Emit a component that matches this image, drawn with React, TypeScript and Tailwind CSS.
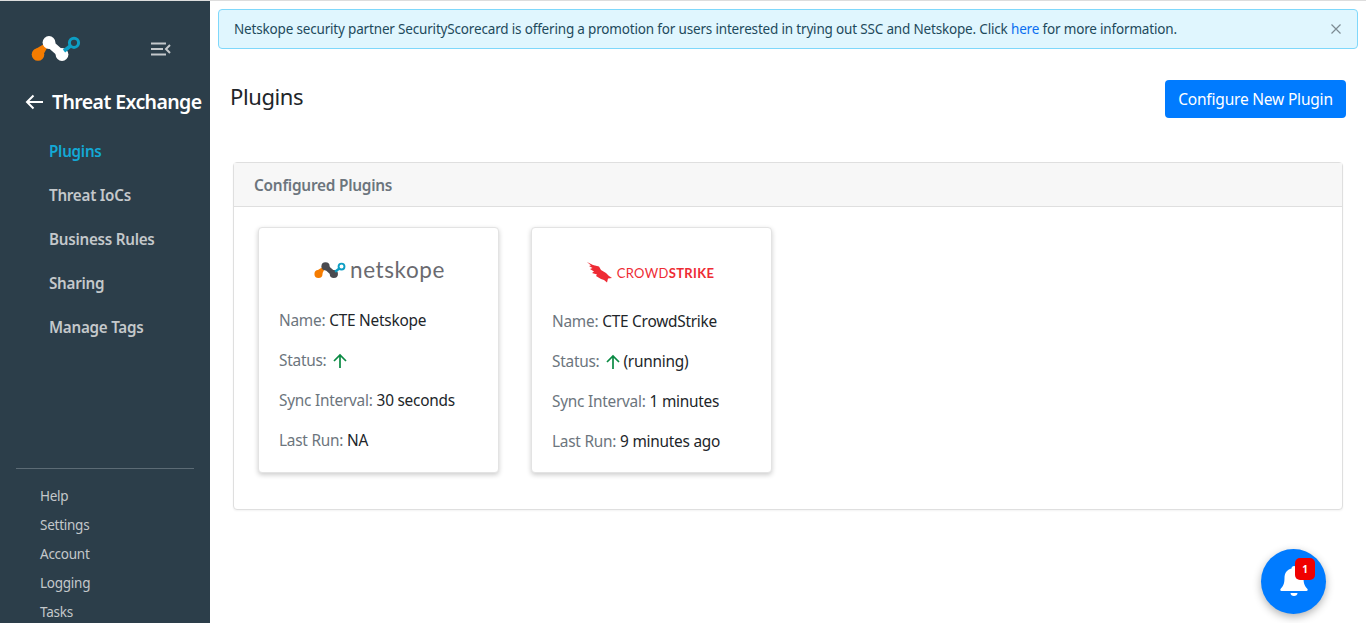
import React from "react";

function Mark({ ink = "#ffffff", className = "" }: { ink?: string; className?: string }) {
  return (
    <svg viewBox="0 0 50 26" className={className} aria-hidden="true">
      <path d="M3 14 L13 8 L16 12 L10 23 Z" fill="#f57c00" />
      <circle cx="7" cy="18.5" r="6.3" fill="#f57c00" />
      <path d="M18 7 L31 18.5" stroke={ink} strokeWidth="8" strokeLinecap="round" />
      <circle cx="18" cy="6.5" r="6.4" fill={ink} />
      <circle cx="31" cy="18.5" r="6.4" fill={ink} />
      <path d="M33 15 L40 9.5" stroke="#0d9ec4" strokeWidth="3.6" />
      <circle cx="43" cy="6.8" r="4.6" fill="none" stroke="#0d9ec4" strokeWidth="3" />
    </svg>
  );
}

function Field({ label, children }: { label: string; children: React.ReactNode }) {
  return (
    <div className="flex h-[40px] items-center whitespace-nowrap">
      <span className="text-[#6c757d]">{label}</span>
      <span className="ml-[4px] flex items-center text-[#212529]">{children}</span>
    </div>
  );
}

function Up() {
  return (
    <svg width="16" height="16" viewBox="0 0 16 16" fill="none" stroke="#0a8a43" strokeWidth="1.7" className="ml-[2px]">
      <path d="M8 15 V2 M2 8 L8 2 L14 8" />
    </svg>
  );
}

function PluginCard({ logo, rows, logoH }: { logo: React.ReactNode; rows: React.ReactNode; logoH: string }) {
  return (
    <div className="h-[246px] w-[241px] rounded-[4px] border border-[#e3e3e3] bg-white px-[20px] shadow-[0_2px_5px_rgba(0,0,0,0.2)]">
      <div className={`flex items-center justify-center ${logoH}`}>{logo}</div>
      {rows}
    </div>
  );
}

export default function App() {
  const nav = ["Plugins", "Threat IoCs", "Business Rules", "Sharing", "Manage Tags"];
  const foot = ["Help", "Settings", "Account", "Logging", "Tasks"];
  return (
    <div className="relative flex h-[623px] w-[1366px] overflow-hidden border-t border-[#dddddd] bg-white font-['Noto_Sans',sans-serif] text-[15.4px] tracking-[-0.25px]">
      <aside className="flex h-[622px] w-[210px] shrink-0 flex-col overflow-hidden bg-[#2c3e4a]">
        <div className="flex h-[72px] shrink-0 items-center pl-[31px] pt-[23px]">
          <Mark className="h-[26px] w-[50px]" />
          <svg width="20" height="14" viewBox="0 0 20 14" fill="none" stroke="#c4c8cb" strokeWidth="2" className="ml-[70px]">
            <path d="M0 1.5 H15 M0 7 H12 M0 12.5 H15 M19 3 L15 7 L19 11" />
          </svg>
        </div>
        <div className="mt-[15px] flex shrink-0 items-center pl-[25px] text-white">
          <svg width="18" height="16" viewBox="0 0 18 16" fill="none" stroke="white" strokeWidth="2">
            <path d="M18 8 H2 M8.5 1.5 L2 8 L8.5 14.5" />
          </svg>
          <span className="ml-[9px] whitespace-nowrap text-[19.5px] font-semibold leading-[28px] tracking-[-0.6px]">Threat Exchange</span>
        </div>
        <nav className="mt-[13px] flex shrink-0 flex-col pl-[49px]">
          {nav.map((n, i) => (
            <div key={n} className={`flex h-[44px] items-center text-[15.2px] font-semibold ${i === 0 ? "text-[#13a9d6]" : "text-[#c4c8cb]"}`}>
              {n}
            </div>
          ))}
        </nav>
        <div className="mx-[16px] mt-[119px] shrink-0 border-t border-[#5c6b75]" />
        <div className="mt-[13px] flex shrink-0 flex-col pl-[40px] text-[13.5px] tracking-[-0.25px] text-[#c4c8cb]">
          {foot.map((f) => (
            <div key={f} className="flex h-[29px] shrink-0 items-center">{f}</div>
          ))}
        </div>
      </aside>

      <main className="flex min-w-0 flex-1 flex-col">
        <div className="ml-[8px] mr-[8px] mt-[8px] flex h-[40px] items-center justify-between rounded-[4px] border border-[#7fd8fb] bg-[#e0f6fe] pl-[15px] pr-[16px] text-[13.5px] tracking-[-0.175px] text-[#1e4a5c]">
          <span>
            Netskope security partner SecurityScorecard is offering a promotion for users interested in trying out SSC and Netskope. Click <span className="text-[#0b6ef0]">here</span> for more information.
          </span>
          <svg width="10" height="10" viewBox="0 0 10 10" stroke="#7d8b93" strokeWidth="1.2">
            <path d="M0.5 0.5 L9.5 9.5 M9.5 0.5 L0.5 9.5" />
          </svg>
        </div>

        <div className="ml-[20px] mr-[20px] mt-[31px] flex items-start justify-between">
          <h1 className="mt-[1px] text-[22px] font-normal leading-[30px] tracking-[-0.4px] text-[#212529]">Plugins</h1>
          <button className="h-[38px] w-[181px] rounded-[4px] bg-[#007bff] pt-[2px] text-[15.5px] tracking-[-0.2px] text-white">Configure New Plugin</button>
        </div>

        <section className="ml-[23px] mr-[23px] mt-[44px] h-[348px] rounded-[4px] border border-[#dfdfdf] bg-white shadow-[0_1px_2px_rgba(0,0,0,0.05)]">
          <div className="flex h-[44px] items-center border-b border-[#dfdfdf] bg-[#f7f7f7] pl-[20px] pt-[2px] text-[15.4px] font-semibold text-[#6c757d]">
            Configured Plugins
          </div>
          <div className="flex gap-[32px] pl-[24px] pt-[20px]">
            <PluginCard
              logoH="h-[73px] pt-[11px]"
              logo={
                <div className="ml-[2px] flex items-center">
                  <Mark ink="#4a4a4f" className="h-[17px] w-[32px]" />
                  <span className="ml-[4px] font-['Lato',sans-serif] text-[22.5px] font-normal leading-none tracking-[0.6px] text-[#6a6a6f]">netskope</span>
                </div>
              }
              rows={
                <>
                  <Field label="Name:">CTE Netskope</Field>
                  <Field label="Status:"><Up /></Field>
                  <Field label="Sync Interval:">30 seconds</Field>
                  <Field label="Last Run:">NA</Field>
                </>
              }
            />
            <PluginCard
              logoH="h-[74px] pt-[14px]"
              logo={
                <div className="-ml-[2px] flex items-center">
                  <svg width="25" height="21" viewBox="0 0 25 21" fill="#ee2b34" aria-hidden="true">
                    <path d="M0 0 L6 3 L12 4.5 L14 8 L19 11 L22 14 L25 16 L21 16.5 L20 20.5 L17 18 L14 17 L9 14 L10 12.5 L5 11 L7 9.5 L3 7 L5.5 6 L2 4 L4 3.5 Z" />
                  </svg>
                  <span className="ml-[5px] mt-[2px] whitespace-nowrap font-['Lato',sans-serif] text-[13px] leading-none tracking-[0.35px] text-[#ee2b34]">
                    CROWD<span className="font-bold">STRIKE</span>
                  </span>
                </div>
              }
              rows={
                <>
                  <Field label="Name:">CTE CrowdStrike</Field>
                  <Field label="Status:"><Up /><span className="ml-[2px]">(running)</span></Field>
                  <Field label="Sync Interval:">1 minutes</Field>
                  <Field label="Last Run:">9 minutes ago</Field>
                </>
              }
            />
          </div>
        </section>
      </main>

      <div className="absolute left-[1261px] top-[548px] flex h-[65px] w-[65px] items-center justify-center rounded-full bg-[#007bff] shadow-[0_3px_8px_rgba(0,0,0,0.3)]">
        <svg width="28" height="31" viewBox="0 0 28 31" fill="white" aria-hidden="true">
          <path d="M14 0 C15.5 0 16.5 1 16.5 2.5 C21 3.5 23.5 7 23.5 12 C23.5 18 25 20.5 27.5 23 C28 24 27.5 25 26.5 25 H1.5 C0.5 25 0 24 0.5 23 C3 20.5 4.5 18 4.5 12 C4.5 7 7 3.5 11.5 2.5 C11.5 1 12.5 0 14 0 Z M10.5 27 H17.5 C17.5 29 16 30 14 30 C12 30 10.5 29 10.5 27 Z" />
        </svg>
        <span className="absolute left-[34px] top-[9px] flex h-[22px] w-[20px] items-center justify-center rounded-[5px] bg-[#f00000] text-[10px] font-bold text-white">1</span>
      </div>
    </div>
  );
}
